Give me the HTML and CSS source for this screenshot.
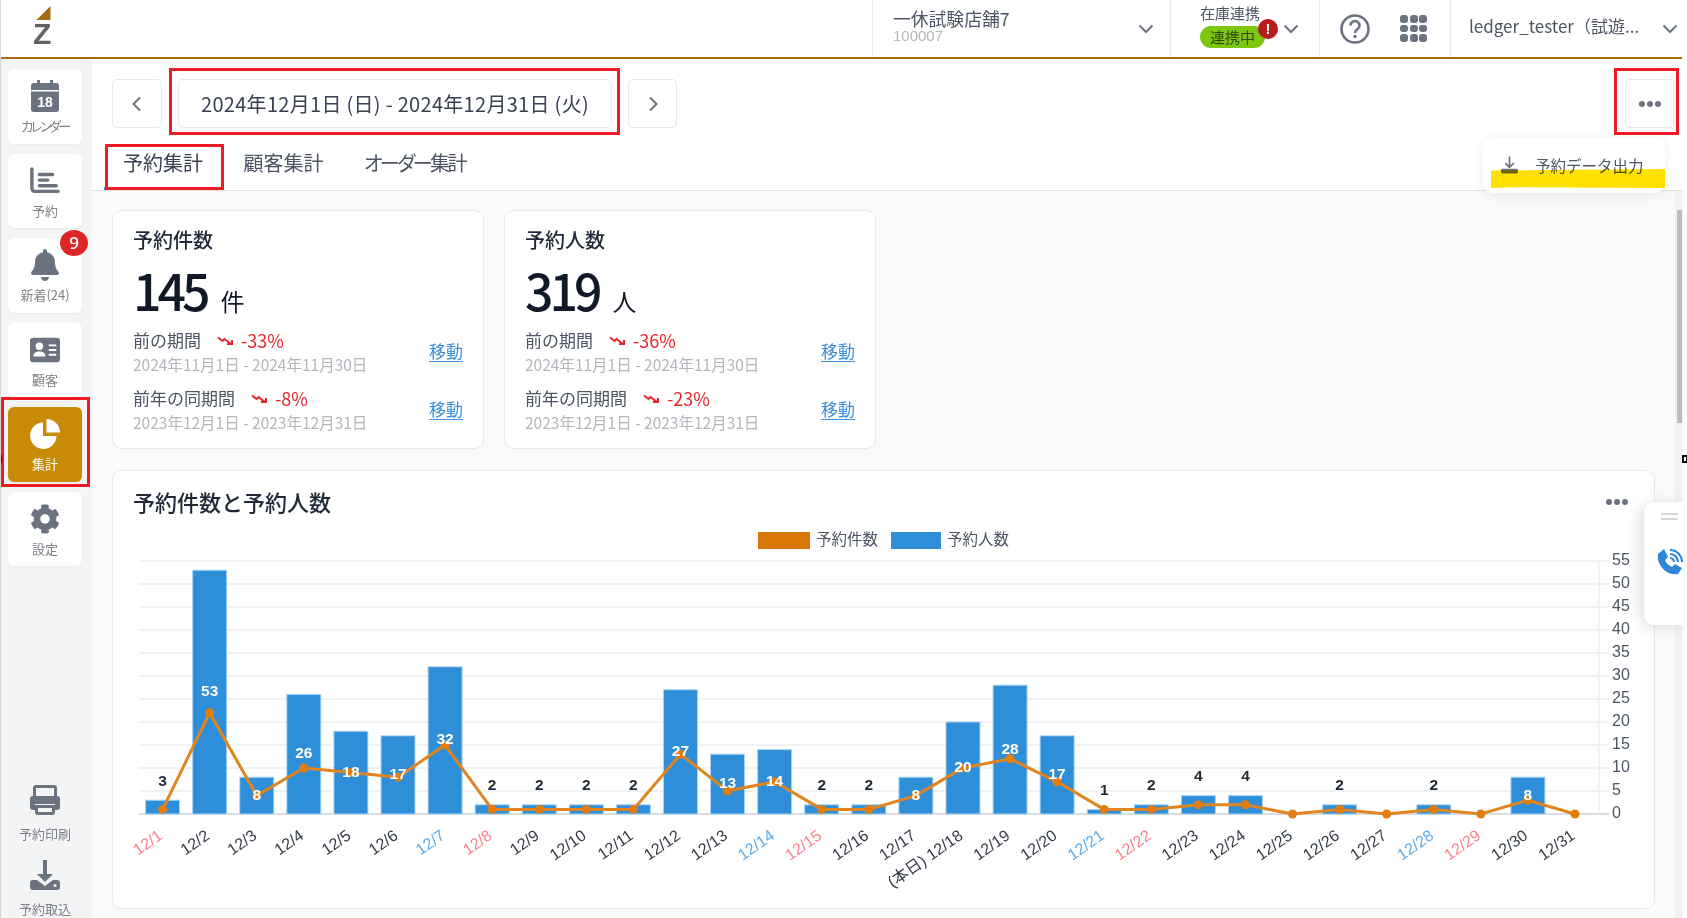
FILE: index.html
```html
<!DOCTYPE html>
<html lang="ja">
<head>
    <meta charset="UTF-8">
    <meta name="viewport" content="width=device-width, initial-scale=1.0">
    <title>予約集計</title>
    <link rel="stylesheet" href="styles.css">
</head>
<body>
<div class="app">

    <header class="topbar">
        <div class="logo">
            <svg class="logo-mark" viewBox="0 0 14 14"><path d="M14 0V14H0Z"/></svg>
            <span class="logo-z">Z</span>
        </div>
        <div class="seg seg-store">
            <div class="store-text">
                <div class="store-name">一休試験店舗7</div>
                <div class="store-id">100007</div>
            </div>
            <svg class="chev" viewBox="0 0 16 10"><path d="M1.5 1.5 8 8l6.500-6.500"/></svg>
        </div>
        <div class="seg seg-stock">
            <div class="stock-text">
                <div class="stock-label">在庫連携</div>
                <div class="pill">連携中</div>
            </div>
            <span class="alert">!</span>
            <svg class="chev" viewBox="0 0 16 10"><path d="M1.500 1.500 8 8l6.500-6.500"/></svg>
        </div>
        <div class="seg seg-tools">
            <svg class="help" viewBox="0 0 30 30">
                <circle cx="15" cy="15" r="13.500"/>
                <path d="M10.500 11.500a4.500 4.500 0 1 1 6.800 3.900c-1.600.9-2.300 1.800-2.300 3.600"/>
                <circle class="help-dot" cx="15" cy="22.500" r="1.700"/>
            </svg>
            <div class="apps"><i></i><i></i><i></i><i></i><i></i><i></i><i></i><i></i><i></i></div>
        </div>
        <div class="seg seg-user">
            <span class="user-name">ledger_tester（試遊...</span>
            <svg class="chev" viewBox="0 0 16 10"><path d="M1.500 1.500 8 8l6.500-6.500"/></svg>
        </div>
    </header>

    <div class="body">
        <nav class="sidebar">
            <a class="nav-item">
                <svg class="nav-icon" viewBox="0 0 30 32">
                    <path d="M7 0h3v4H7zM20 0h3v4h-3z"/>
                    <path d="M4 3h22a3 3 0 0 1 3 3v4H1V6a3 3 0 0 1 3-3z"/>
                    <path d="M1 11.500h28V29a3 3 0 0 1-3 3H4a3 3 0 0 1-3-3z"/>
                    <text class="cal-num" x="15" y="27">18</text>
                </svg>
                <span class="kana">カレンダー</span>
            </a>
            <a class="nav-item">
                <svg class="nav-icon nav-stroke" viewBox="0 0 32 32">
                    <path d="M2 3v21a3 3 0 0 0 3 3h25"/>
                    <path d="M10 9h14M10 15h9M10 21h18"/>
                </svg>
                <span>予約</span>
            </a>
            <a class="nav-item">
                <svg class="nav-icon" viewBox="0 0 448 512"><path d="M224 512c35.320 0 63.970-28.650 63.970-64H160.030c0 35.350 28.650 64 63.970 64zm215.390-149.710c-19.320-20.760-55.470-51.990-55.470-154.290 0-77.700-54.480-139.900-127.940-155.160V32c0-17.670-14.320-32-31.980-32s-31.980 14.330-31.980 32v20.840C118.560 68.100 64.080 130.300 64.080 208c0 102.300-36.150 133.530-55.470 154.290-6 6.450-8.660 14.160-8.610 21.710.11 16.400 12.980 32 32.100 32h383.800c19.120 0 32-15.600 32.100-32 .05-7.550-2.610-15.270-8.610-21.710z"/></svg>
                <span>新着(24)</span>
                <b class="badge">9</b>
            </a>
            <a class="nav-item">
                <svg class="nav-icon" viewBox="0 0 32 26">
                    <rect width="32" height="26" rx="3.500"/>
                    <circle class="cut" cx="10" cy="9" r="4"/>
                    <path class="cut" d="M3.500 20c0-4 2.500-5.500 6.500-5.500s6.500 1.500 6.500 5.500z"/>
                    <path class="cut" d="M20 7h8v2h-8zM20 12h8v2h-8zM20 17h8v2h-8z"/>
                </svg>
                <span>顧客</span>
            </a>
            <a class="nav-item active">
                <svg class="nav-icon" viewBox="0 0 30 30">
                    <path d="M13 3.500A13.200 13.200 0 1 0 26.500 17H13z"/>
                    <path d="M16.500 0A13.500 13.500 0 0 1 30 13.500H16.500z"/>
                </svg>
                <span>集計</span>
            </a>
            <a class="nav-item">
                <svg class="nav-icon" viewBox="0 0 512 512"><path d="M487.400 315.700l-42.600-24.600c4.300-23.200 4.300-47 0-70.200l42.600-24.600c4.900-2.800 7.100-8.600 5.500-14-11.100-35.600-30-67.800-54.700-94.600-3.800-4.100-10-5.100-14.800-2.300L380.800 110c-17.900-15.400-38.500-27.300-60.800-35.100V25.800c0-5.600-3.900-10.500-9.400-11.700-36.700-8.200-74.300-7.800-109.200 0-5.500 1.200-9.400 6.100-9.400 11.700V75c-22.200 7.900-42.800 19.800-60.800 35.100L88.700 85.500c-4.900-2.800-11-1.900-14.800 2.300-24.700 26.700-43.600 58.900-54.700 94.600-1.700 5.400.6 11.200 5.500 14L67.300 221c-4.300 23.200-4.300 47 0 70.200l-42.600 24.600c-4.900 2.800-7.100 8.600-5.500 14 11.100 35.600 30 67.800 54.700 94.600 3.800 4.100 10 5.100 14.800 2.300l42.600-24.600c17.900 15.400 38.500 27.300 60.800 35.100v49.200c0 5.600 3.900 10.500 9.400 11.700 36.700 8.200 74.300 7.800 109.200 0 5.500-1.200 9.400-6.100 9.400-11.700v-49.200c22.200-7.900 42.800-19.800 60.800-35.100l42.600 24.600c4.900 2.800 11 1.900 14.800-2.300 24.700-26.700 43.600-58.900 54.700-94.600 1.500-5.500-.7-11.300-5.600-14.100zM256 336c-44.100 0-80-35.900-80-80s35.900-80 80-80 80 35.900 80 80-35.900 80-80 80z"/></svg>
                <span>設定</span>
            </a>
            <a class="nav-plain nav-print">
                <svg class="nav-icon" viewBox="0 0 30 30">
                    <path d="M6 0h18a3 3 0 0 1 3 3v9h-3V3H6v9H3V3a3 3 0 0 1 3-3z"/>
                    <path d="M3 11h24a3 3 0 0 1 3 3v8a3 3 0 0 1-3 3h-2v-6H5v6H3a3 3 0 0 1-3-3v-8a3 3 0 0 1 3-3z"/>
                    <path d="M5 20h20v7a3 3 0 0 1-3 3H8a3 3 0 0 1-3-3zm3 3v4h14v-4z"/>
                </svg>
                <span>予約印刷</span>
            </a>
            <a class="nav-plain nav-import">
                <svg class="nav-icon" viewBox="0 0 30 30">
                    <path d="M13 0h4v14h6l-8 8-8-8h6z"/>
                    <path d="M3 20h4l8 6 8-6h4a3 3 0 0 1 3 3v4a3 3 0 0 1-3 3H3a3 3 0 0 1-3-3v-4a3 3 0 0 1 3-3z"/>
                    <circle class="cut" cx="25" cy="25.500" r="1.500"/>
                </svg>
                <span>予約取込</span>
            </a>
        </nav>

        <main class="main">
            <section class="toolbar">
                <div class="date-row">
                    <button class="box-btn btn-prev">
                        <svg viewBox="0 0 10 16"><path d="M8 1.500 1.500 8 8 14.500"/></svg>
                    </button>
                    <div class="box-btn date-box">2024年12月1日 (日) - 2024年12月31日 (火)</div>
                    <button class="box-btn btn-next">
                        <svg viewBox="0 0 10 16"><path d="M2 1.500 8.500 8 2 14.500"/></svg>
                    </button>
                    <button class="box-btn btn-more"><i></i><i></i><i></i></button>
                </div>
                <div class="tabs">
                    <a class="tab active">予約集計</a>
                    <a class="tab">顧客集計</a>
                    <a class="tab kana">オーダー集計</a>
                </div>
            </section>

            <div class="scroll-wrap">
                <div class="content">
                    <div class="stat-cards">
                        <section class="card stat">
                            <h2 class="stat-title">予約件数</h2>
                            <div class="stat-value">145<small>件</small></div>
                            <div class="compare">
                                <div>
                                    <div class="compare-head">前の期間
                                        <svg class="trend" viewBox="0 0 17 9"><path d="M1 1.500 5.500 5l2-2 6.500 5M10 8h5V4"/></svg>
                                        <span class="down">-33%</span>
                                    </div>
                                    <div class="compare-date">2024年11月1日 - 2024年11月30日</div>
                                </div>
                                <a class="move">移動</a>
                            </div>
                            <div class="compare">
                                <div>
                                    <div class="compare-head">前年の同期間
                                        <svg class="trend" viewBox="0 0 17 9"><path d="M1 1.500 5.500 5l2-2 6.500 5M10 8h5V4"/></svg>
                                        <span class="down">-8%</span>
                                    </div>
                                    <div class="compare-date">2023年12月1日 - 2023年12月31日</div>
                                </div>
                                <a class="move">移動</a>
                            </div>
                        </section>
                        <section class="card stat">
                            <h2 class="stat-title">予約人数</h2>
                            <div class="stat-value">319<small>人</small></div>
                            <div class="compare">
                                <div>
                                    <div class="compare-head">前の期間
                                        <svg class="trend" viewBox="0 0 17 9"><path d="M1 1.500 5.500 5l2-2 6.500 5M10 8h5V4"/></svg>
                                        <span class="down">-36%</span>
                                    </div>
                                    <div class="compare-date">2024年11月1日 - 2024年11月30日</div>
                                </div>
                                <a class="move">移動</a>
                            </div>
                            <div class="compare">
                                <div>
                                    <div class="compare-head">前年の同期間
                                        <svg class="trend" viewBox="0 0 17 9"><path d="M1 1.500 5.500 5l2-2 6.500 5M10 8h5V4"/></svg>
                                        <span class="down">-23%</span>
                                    </div>
                                    <div class="compare-date">2023年12月1日 - 2023年12月31日</div>
                                </div>
                                <a class="move">移動</a>
                            </div>
                        </section>
                    </div>

                    <section class="card chart-card">
                        <div class="chart-head">
                            <h2 class="chart-title">予約件数と予約人数</h2>
                            <div class="dots"><i></i><i></i><i></i></div>
                        </div>
                        <div class="legend">
                            <span class="swatch swatch-orders"></span><span class="legend-text">予約件数</span>
                            <span class="swatch swatch-people"></span><span class="legend-text">予約人数</span>
                        </div>
                        <svg id="chart" class="chart" viewBox="113 551 1541 357"></svg>
                    </section>
                </div>
                <div class="scrollbar"><div class="thumb"></div></div>
            </div>
        </main>
    </div>

    <!-- floating bits -->
    <div class="popover">
        <svg class="pop-icon" viewBox="0 0 18 18">
            <path class="pop-arrow" d="M9 0v11M4.500 7 9 11.500 13.500 7"/>
            <rect y="13" width="18" height="5" rx="1.500"/>
        </svg>
        <span>予約データ出力</span>
    </div>
    <div class="highlight"></div>

    <aside class="float-panel">
        <div class="grip"></div>
        <svg class="phone" viewBox="0 0 27 26">
            <path class="phone-body" d="M1 5 7 0l4 8-3 3c1 3 3 5 7 7l3-3 7 4-4 6C10 27-1 16 1 5z"/>
            <path class="phone-wave" d="M13 9a4 4 0 0 1 4 4M13 5a8 8 0 0 1 8 8M13 1a12 12 0 0 1 12 12"/>
        </svg>
    </aside>

    <div class="mark mark-date"></div>
    <div class="mark mark-more"></div>
    <div class="mark mark-tab"></div>
    <div class="mark mark-nav"></div>
    <div class="grab grab-left"></div>
    <div class="grab grab-right"></div>
</div>

<script src="chart.js"></script>
</body>
</html>
```

FILE: styles.css
```css
* {
    margin: 0;
    padding: 0;
    box-sizing: border-box;
}

body {
    width: 1687px;
    height: 918px;
    overflow: hidden;
    background: #fff;
    font-family: "Noto Sans CJK JP", "Noto Sans", sans-serif;
    color: #374151;
}

.app {
    position: relative;
    display: flex;
    flex-direction: column;
    width: 1687px;
    height: 918px;
    padding-right: 4px;
    border-left: 1px solid #d8d8d8;
    overflow: hidden;
}

.kana {
    font-feature-settings: "palt";
}

/* top bar */
.topbar {
    display: flex;
    flex: none;
    height: 59px;
    margin-right: 1px;
    border-bottom: 2px solid #a9690f;
    background: #fff;
}

.logo {
    position: relative;
    flex: 1;
}

.logo-mark {
    position: absolute;
    left: 35px;
    top: 6px;
    width: 15px;
    height: 14px;
    fill: #a9690f;
}

.logo-z {
    position: absolute;
    left: 32px;
    top: 19px;
    font: bold 30px/30px "Liberation Sans", sans-serif;
    color: #636363;
}

.seg {
    display: flex;
    align-items: center;
    position: relative;
    height: 57px;
    border-left: 1px solid #e5e7eb;
}

.chev {
    width: 16px;
    height: 10px;
    fill: none;
    stroke: #6b7280;
    stroke-width: 2;
}

.seg-store {
    width: 298px;
    padding: 0 16px 0 20px;
    justify-content: space-between;
}

.store-text {
    margin-top: -6px;
}

.store-name {
    font-size: 17.800px;
    line-height: 20px;
    color: #4b5563;
}

.store-id {
    font: 15px/16px "Liberation Sans", sans-serif;
    color: #b3b7bd;
}

.seg-stock {
    width: 149px;
    padding-left: 29px;
}

.stock-label {
    font-size: 15px;
    line-height: 20px;
    margin-top: -6px;
    color: #4b5563;
}

.pill {
    width: 65px;
    height: 22px;
    border-radius: 11px;
    background: #7dc70f;
    font-size: 15px;
    line-height: 22px;
    text-align: center;
    color: #2f4a10;
    margin-top: 3px;
}

.alert {
    position: absolute;
    left: 87px;
    top: 19px;
    width: 20px;
    height: 20px;
    border-radius: 50%;
    background: #b91c1c;
    color: #fff;
    font: bold 15px/20px "Liberation Sans", sans-serif;
    text-align: center;
}

.seg-stock .chev {
    margin-left: 18px;
}

.seg-tools {
    width: 131px;
    padding-left: 20px;
    gap: 30px;
}

.help {
    width: 30px;
    height: 30px;
    fill: none;
    stroke: #6b7280;
    stroke-width: 2.600;
}

.help-dot {
    fill: #6b7280;
    stroke: none;
}

.apps {
    display: grid;
    grid-template-columns: repeat(3, 8px);
    grid-auto-rows: 7.500px;
    gap: 2px 1.500px;
}

.apps i {
    background: #6b7280;
    border-radius: 3px;
}

.seg-user {
    width: 232px;
    padding: 0 4px 0 18px;
    justify-content: space-between;
}

.user-name {
    margin-bottom: 6px;
    font-size: 17px;
    color: #4b5563;
}

/* layout */
.body {
    display: flex;
    flex: 1;
    min-height: 0;
}

.sidebar {
    display: flex;
    flex: none;
    flex-direction: column;
    gap: 10px;
    width: 91px;
    padding: 10px 0 1px 7px;
    background: #f3f4f6;
}

.nav-item {
    position: relative;
    display: flex;
    flex: none;
    flex-direction: column;
    align-items: center;
    width: 74px;
    height: 74.500px;
    padding-top: 11px;
    border-radius: 6px;
    background: #fff;
    box-shadow: 0 1px 2px rgba(0, 0, 0, 0.04);
    color: #7d8187;
}

.nav-item span {
    margin-top: 5px;
    font-size: 13px;
    line-height: 18px;
}

.nav-item .kana {
    letter-spacing: -2.500px;
}

.nav-icon {
    width: 30px;
    height: 32px;
    fill: #6b7280;
}

.nav-stroke {
    fill: none;
    stroke: #6b7280;
    stroke-width: 3.600;
    stroke-linecap: round;
}

.cal-num {
    fill: #fff;
    font: bold 14px "Liberation Sans", sans-serif;
    text-anchor: middle;
}

.cut {
    fill: #fff;
}

.nav-item.active {
    background: #c98a05;
    color: #fff;
}

.nav-item.active .nav-icon {
    fill: #fff;
}

.badge {
    position: absolute;
    right: -6px;
    top: -8px;
    width: 28px;
    height: 26px;
    border-radius: 50%;
    background: #dc2626;
    color: #fff;
    font: 500 17px/26px "Noto Sans", sans-serif;
    text-align: center;
}

.nav-plain {
    display: flex;
    flex: none;
    flex-direction: column;
    align-items: center;
    width: 74px;
    color: #7d8187;
}

.nav-plain .nav-icon {
    height: 30px;
}

.nav-plain span {
    margin-top: 11px;
    font-size: 13px;
    line-height: 16px;
}

.nav-print {
    margin-top: auto;
}

.nav-import {
    margin-top: 8px;
}

.main {
    display: flex;
    flex: 1;
    flex-direction: column;
    min-width: 0;
}

.toolbar {
    flex: none;
    height: 132px;
    padding: 20px 9px 0 20px;
    border-bottom: 1px solid #dfe3e8;
    background: #fff;
}

.date-row {
    display: flex;
    gap: 16px;
    height: 49px;
}

.box-btn {
    display: flex;
    align-items: center;
    justify-content: center;
    height: 49px;
    border: 1px solid #e5e7eb;
    border-radius: 5px;
    background: #fff;
}

.box-btn svg {
    width: 10px;
    height: 16px;
    fill: none;
    stroke: #6b7280;
    stroke-width: 2;
}

.btn-prev {
    width: 50px;
}

.btn-next {
    width: 49px;
}

.date-box {
    width: 434px;
    padding-bottom: 1px;
    font-size: 20px;
    letter-spacing: 0.3px;
    color: #374151;
}

.btn-more {
    width: 49px;
    margin-left: auto;
    gap: 2px;
}

.btn-more i,
.dots i {
    width: 6px;
    height: 6px;
    border-radius: 50%;
    background: #6b7280;
}

.tabs {
    display: flex;
    gap: 2.500px;
    height: 46px;
    margin: 16px 0 0 -8px;
}

.tab {
    height: 46px;
    padding: 0 19px;
    font-size: 20px;
    line-height: 38px;
    color: #4b5563;
}

.tab.kana {
    letter-spacing: -2.500px;
}

.tab.active {
    border-bottom: 3px solid #3b8fd9;
    color: #374151;
}

.scroll-wrap {
    display: flex;
    flex: 1;
    min-height: 0;
}

.content {
    flex: 1;
    min-width: 0;
    padding: 19px 20px 0;
    background: #f9fafb;
}

.scrollbar {
    flex: none;
    width: 8px;
    padding: 19px 1px 0 2px;
    background: #f1f1f1;
}

.thumb {
    height: 213px;
    background: #bdbdbd;
}

/* cards */
.card {
    border: 1px solid #e5e7eb;
    border-radius: 10px;
    background: #fff;
}

.stat-cards {
    display: flex;
    gap: 20px;
}

.stat {
    width: 372px;
    height: 239px;
    padding: 16px 20px 0;
}

.stat-title {
    font-size: 20px;
    font-weight: 500;
    line-height: 26px;
    color: #1f2937;
}

.stat-value {
    height: 56px;
    margin: 8px 0 11px;
    font-size: 50px;
    font-weight: 500;
    line-height: 56px;
    letter-spacing: -4px;
    color: #111827;
}

.stat-value small {
    margin-left: 14px;
    font-size: 24px;
    font-weight: 400;
    letter-spacing: 0;
}

.compare {
    display: flex;
    align-items: center;
    justify-content: space-between;
    margin-bottom: 10px;
}

.compare-head {
    display: flex;
    align-items: center;
    font-size: 17px;
    line-height: 24px;
    color: #4b5563;
}

.trend {
    width: 17px;
    height: 9px;
    margin: 0 7px 0 16px;
    fill: none;
    stroke: #e5262d;
    stroke-width: 2;
}

.down {
    font-size: 18px;
    color: #e5262d;
}

.compare-date {
    font-size: 15.500px;
    line-height: 24px;
    color: #b3b7bd;
}

.move {
    margin-bottom: 4px;
    font-size: 17px;
    color: #3d8fdb;
    text-decoration: underline;
    text-underline-offset: 3px;
}

.chart-card {
    height: 439px;
    margin-top: 21px;
    padding-top: 16px;
}

.chart-head {
    display: flex;
    align-items: center;
    justify-content: space-between;
    padding: 0 26px 0 20px;
}

.chart-title {
    font-size: 22px;
    font-weight: 500;
    line-height: 28px;
    color: #1f2937;
}

.dots {
    display: flex;
    gap: 2px;
    margin-top: 2px;
}

.legend {
    display: flex;
    align-items: center;
    justify-content: center;
    gap: 6px;
    height: 20px;
    margin: 15px 0 1px;
    font-size: 15.500px;
    color: #4b5563;
}

.legend-text {
    margin-top: -5px;
}

.swatch {
    height: 17px;
}

.swatch-orders {
    width: 52px;
    background: #d97706;
}

.swatch-people {
    width: 50px;
    margin-left: 7px;
    background: #2e8ed8;
}

.chart {
    display: block;
    width: 1541px;
    height: 357px;
}

.grid-line {
    stroke: #eceef0;
    stroke-width: 1.500;
}

.grid-base {
    stroke: #d9dce0;
    stroke-width: 2;
}

.bar {
    fill: #2e8ed8;
    stroke: #a8d4f5;
    stroke-width: 1;
}

.orders-line {
    fill: none;
    stroke: #e0851f;
    stroke-width: 3;
}

.orders-dot {
    fill: #e07e12;
}

.y-label {
    fill: #4b5563;
    font: 16px "Liberation Sans", sans-serif;
}

.x-label {
    fill: #333b47;
    font: 16px "Liberation Sans", "Noto Sans CJK JP", sans-serif;
    text-anchor: end;
}

.x-label.sun {
    fill: #ff7f8a;
}

.x-label.sat {
    fill: #5aabeb;
}

.bar-label {
    font: bold 15.500px "Liberation Sans", sans-serif;
    text-anchor: middle;
    dominant-baseline: central;
    fill: #1f2937;
}

.bar-label.inside {
    fill: #fff;
}

/* floating bits */
.popover {
    position: absolute;
    left: 1482px;
    top: 138px;
    display: flex;
    align-items: center;
    gap: 17px;
    width: 182px;
    height: 55px;
    padding: 0 0 2px 18px;
    border-radius: 10px;
    background: #fff;
    box-shadow: 0 2px 12px rgba(0, 0, 0, 0.08);
    font-size: 15.500px;
    color: #4b5563;
}

.pop-icon {
    width: 17px;
    height: 18px;
    fill: #6b7280;
}

.pop-arrow {
    fill: none;
    stroke: #6b7280;
    stroke-width: 1.800;
}

.highlight {
    position: absolute;
    left: 1490px;
    top: 169px;
    width: 174px;
    height: 19px;
    background: #ffe100;
    mix-blend-mode: multiply;
    clip-path: polygon(0 8%, 100% 0, 100% 100%, 15% 96%, 0 100%);
}

.float-panel {
    position: absolute;
    left: 1643px;
    top: 502px;
    width: 39px;
    height: 123px;
    overflow: hidden;
    border-radius: 10px 0 0 10px;
    background: #fff;
    box-shadow: -4px 2px 14px rgba(0, 0, 0, 0.12);
}

.grip {
    width: 17px;
    height: 7px;
    margin: 11px 0 0 17px;
    border-top: 2px solid #d4d6da;
    border-bottom: 2px solid #d4d6da;
}

.phone {
    display: block;
    width: 27px;
    height: 26px;
    margin: 29px 0 0 13px;
}

.phone-body {
    fill: #2e86d6;
}

.phone-wave {
    fill: none;
    stroke: #2e86d6;
    stroke-width: 2.200;
}

.mark {
    position: absolute;
    border: 3px solid #ed1c24;
}

.mark-date {
    left: 168px;
    top: 68px;
    width: 451px;
    height: 67px;
}

.mark-more {
    left: 1613px;
    top: 68px;
    width: 65px;
    height: 67px;
}

.mark-tab {
    left: 104px;
    top: 144px;
    width: 119px;
    height: 46px;
}

.mark-nav {
    left: 0;
    top: 397px;
    width: 89px;
    height: 90px;
}

.grab {
    position: absolute;
    top: 455px;
    height: 8px;
}

.grab-left {
    left: -1px;
    width: 2px;
    background: #222;
}

.grab-right {
    left: 1681px;
    width: 6px;
    border: 2px solid #111;
    background: #fff;
}
```

FILE: chart.js
```js
const people = [3, 53, 8, 26, 18, 17, 32, 2, 2, 2, 2, 27, 13, 14, 2, 2, 8, 20, 28, 17, 1, 2, 4, 4, 0, 2, 0, 2, 0, 8, 0];
const orders = [1, 22, 4, 10, 9, 8, 15, 1, 1, 1, 1, 13, 5, 7, 1, 1, 4, 10, 12, 7, 1, 1, 2, 2, 0, 1, 0, 1, 0, 3, 0];

const sundays = [1, 8, 15, 22, 29];
const saturdays = [7, 14, 21, 28];

const xAt = i => 162.6 + 47.08 * i;
const yAt = v => 814 - 4.6 * v;

let out = '';

for (let v = 0; v <= 55; v += 5) {
    const y = yAt(v);
    const cls = v === 0 ? 'grid-base' : 'grid-line';
    out += `<line class="${cls}" x1="139" x2="1609" y1="${y}" y2="${y}"/>`;
    out += `<text class="y-label" x="1612" y="${y + 4}">${v}</text>`;
}
out += '<line class="grid-line" x1="1599" x2="1599" y1="561" y2="814"/>';

people.forEach((v, i) => {
    if (v > 0) {
        out += `<rect class="bar" x="${xAt(i) - 17}" y="${yAt(v)}" width="34" height="${4.6 * v}"/>`;
    }
});

const points = orders.map((v, i) => `${xAt(i)},${yAt(v)}`).join(' ');
out += `<polyline class="orders-line" points="${points}"/>`;
orders.forEach((v, i) => {
    out += `<circle class="orders-dot" cx="${xAt(i)}" cy="${yAt(v)}" r="4.5"/>`;
});

people.forEach((v, i) => {
    if (v === 0) return;
    if (v >= 8) {
        out += `<text class="bar-label inside" x="${xAt(i)}" y="${yAt(v / 2) - 1.5}">${v}</text>`;
    } else {
        out += `<text class="bar-label" x="${xAt(i)}" y="${yAt(v) - 20}">${v}</text>`;
    }
});

people.forEach((v, i) => {
    const day = i + 1;
    let cls = 'x-label';
    if (sundays.includes(day)) cls += ' sun';
    if (saturdays.includes(day)) cls += ' sat';
    const text = (day === 18 ? '(本日) ' : '') + '12/' + day;
    const x = xAt(i) + 1;
    out += `<text class="${cls}" transform="translate(${x} 838) rotate(-35)">${text}</text>`;
});

document.getElementById('chart').innerHTML = out;
```
